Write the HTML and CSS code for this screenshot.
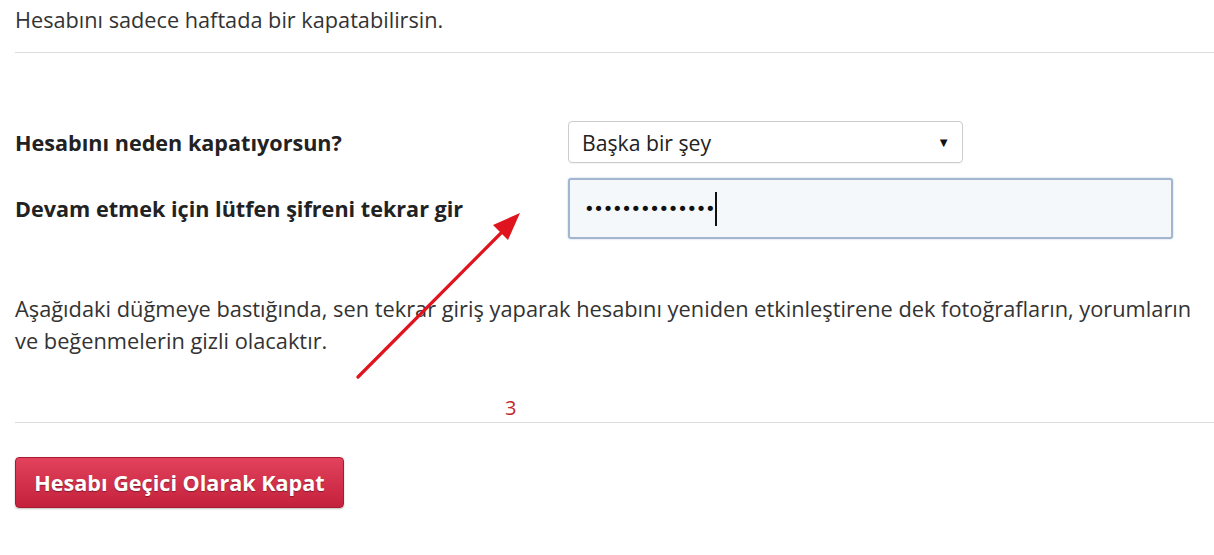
FILE: index.html
```html
<!DOCTYPE html>
<html lang="tr">
<head>
<meta charset="utf-8">
<title>Hesabı Geçici Olarak Kapat</title>
<link rel="stylesheet" href="styles.css">
</head>
<body>
<div class="page">
  <p class="intro">Hesabını sadece haftada bir kapatabilirsin.</p>
  <hr class="rule rule-top">
  <form class="form">
    <div class="row row-select">
      <label class="label" for="reason">Hesabını neden kapatıyorsun?</label>
      <div class="select">
        <span class="select-value">Başka bir şey</span>
        <span class="select-caret">▼</span>
      </div>
    </div>
    <div class="row row-pass">
      <label class="label" for="pass">Devam etmek için lütfen şifreni tekrar gir</label>
      <div class="password"><span class="dots">••••••••••••••</span><span class="caret"></span></div>
    </div>
  </form>
  <p class="note">Aşağıdaki düğmeye bastığında, sen tekrar giriş yaparak hesabını yeniden etkinleştirene dek fotoğrafların, yorumların<br>ve beğenmelerin gizli olacaktır.</p>
  <hr class="rule rule-bottom">
  <button class="btn" type="button">Hesabı Geçici Olarak Kapat</button>

  <span class="step">3</span>
  <svg class="arrow" width="200" height="200" viewBox="0 0 200 200">
    <line x1="8" y1="172" x2="155" y2="24" stroke="#e0141e" stroke-width="3.2" stroke-linecap="round"/>
    <polygon points="170,8 143,20 158,35" fill="#e0141e"/>
  </svg>
</div>
</body>
</html>
```
FILE: styles.css
```css
* { box-sizing: border-box; }
html, body { margin: 0; padding: 0; background: #fff; }
body {
  font-family: "Open Sans", "Noto Sans", sans-serif;
  color: #333;
}
.page {
  position: relative;
  width: 1214px;
  height: 555px;
  padding-left: 15px;
  overflow: hidden;
}
.intro {
  margin: 0;
  padding-top: 6px;
  font-size: 21.7px;
  line-height: 28px;
  color: #333;
}
.rule {
  margin: 0;
  border: 0;
  border-top: 1px solid #dcdcdc;
}
.rule-top { margin-top: 18px; }
.form {
  margin-top: 68px;
  display: flex;
  flex-direction: column;
  gap: 15px;
}
.row {
  display: grid;
  grid-template-columns: 553px 1fr;
  align-items: center;
}
.label {
  font-weight: 700;
  font-size: 21.6px;
  color: #222;
}
.select {
  width: 395px;
  height: 42px;
  border: 1px solid #ccc;
  border-radius: 4px;
  display: flex;
  align-items: center;
  justify-content: space-between;
  padding: 0 12px 0 13px;
  font-size: 21.2px;
  color: #222;
  box-shadow: 0 1px 1px rgba(0,0,0,0.05);
}
.select-caret { font-size: 13px; color: #111; }
.password {
  width: 605px;
  height: 61px;
  border: 2px solid #a3b6cf;
  border-radius: 3px;
  background: #f5f8fb;
  display: flex;
  align-items: center;
  padding-left: 14px;
  box-shadow: 0 0 2px rgba(120,150,190,0.5);
}
.dots {
  font-size: 18px;
  letter-spacing: -1.3px;
  color: #111;
  font-family: "DejaVu Sans", sans-serif;
}
.caret {
  width: 2px;
  height: 34px;
  background: #111;
  margin-left: 1px;
}
.note {
  margin: 54px 0 0;
  font-size: 21.8px;
  line-height: 32px;
  color: #333;
}
.rule-bottom { margin-top: 65px; }
.btn {
  margin-top: 34px;
  width: 329px;
  height: 51px;
  border: 1px solid #a91a31;
  border-radius: 4px;
  background: linear-gradient(#e2425c, #c4213c);
  color: #fff;
  font-family: "Open Sans", "Noto Sans", sans-serif;
  font-weight: 700;
  font-size: 21.6px;
  text-shadow: 0 1px 1px rgba(0,0,0,0.35);
  box-shadow: 0 1px 2px rgba(0,0,0,0.25);
  padding: 0;
}
.step {
  position: absolute;
  left: 505px;
  top: 394px;
  font-size: 20px;
  color: #c0292b;
}
.arrow {
  position: absolute;
  left: 350px;
  top: 205px;
}
```
